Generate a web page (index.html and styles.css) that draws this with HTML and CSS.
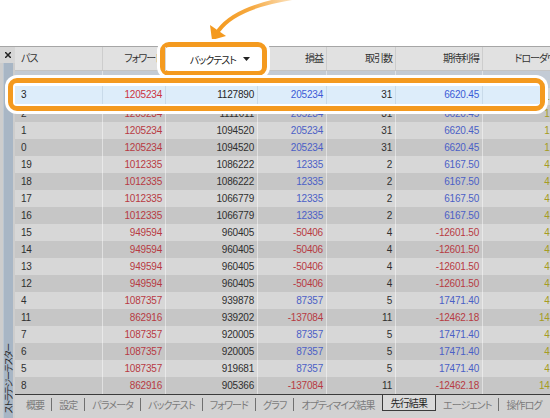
FILE: index.html
```html
<!DOCTYPE html>
<html lang="ja">
<head>
<meta charset="UTF-8">
<meta name="viewport" content="width=device-width, initial-scale=1.0">
<title>ストラテジーテスター</title>
<link rel="stylesheet" href="styles.css">
</head>
<body>
<div class="page">
  <div class="top">
    <svg class="arrow" width="550" height="46" viewBox="0 0 550 46">
      <defs>
        <linearGradient id="ag" x1="292" y1="0" x2="218" y2="31" gradientUnits="userSpaceOnUse">
          <stop offset="0" stop-color="#f49a1f" stop-opacity="0.3"/>
          <stop offset="0.5" stop-color="#f49a1f" stop-opacity="0.85"/>
          <stop offset="1" stop-color="#f49a1f"/>
        </linearGradient>
      </defs>
      <path d="M292 -2 Q236 7 219 30" fill="none" stroke="url(#ag)" stroke-width="4" stroke-linecap="round"/>
      <polygon points="212,40 226,36 210,25" fill="#f49a1f"/>
    </svg>
  </div>

  <div class="window">
    <div class="side">
      <div class="close">
        <svg width="6" height="6" viewBox="0 0 6 6"><path d="M0 0L6 6M6 0L0 6" stroke="#222" stroke-width="1.5"/></svg>
      </div>
      <div class="strip"><span class="strip-label">ストラテジーテスター</span></div>
    </div>

    <div class="main">
      <div class="grid">
        <div class="row head">
          <span>パス</span><span>フォワード</span><span>バックテスト</span><span>損益</span><span>取引数</span><span>期待利得</span><span>ドローダウン</span>
        </div>
        <div class="row sel"><span></span><span></span><span></span><span></span><span></span><span></span><span></span></div>
        <div class="row l"><span>3</span><span class="r">1205234</span><span>1127890</span><span class="b">205234</span><span>31</span><span class="b">6620.45</span><span class="y">1.76</span></div>
        <div class="row d"><span>2</span><span class="r">1205234</span><span>1111011</span><span class="b">205234</span><span>31</span><span class="b">6620.45</span><span class="y">1.76</span></div>
        <div class="row l"><span>1</span><span class="r">1205234</span><span>1094520</span><span class="b">205234</span><span>31</span><span class="b">6620.45</span><span class="y">1.76</span></div>
        <div class="row d"><span>0</span><span class="r">1205234</span><span>1094520</span><span class="b">205234</span><span>31</span><span class="b">6620.45</span><span class="y">1.76</span></div>
        <div class="row l"><span>19</span><span class="r">1012335</span><span>1086222</span><span class="b">12335</span><span>2</span><span class="b">6167.50</span><span class="y">4.21</span></div>
        <div class="row d"><span>18</span><span class="r">1012335</span><span>1086222</span><span class="b">12335</span><span>2</span><span class="b">6167.50</span><span class="y">4.21</span></div>
        <div class="row l"><span>17</span><span class="r">1012335</span><span>1066779</span><span class="b">12335</span><span>2</span><span class="b">6167.50</span><span class="y">4.21</span></div>
        <div class="row d"><span>16</span><span class="r">1012335</span><span>1066779</span><span class="b">12335</span><span>2</span><span class="b">6167.50</span><span class="y">4.21</span></div>
        <div class="row l"><span>15</span><span class="r">949594</span><span>960405</span><span class="r">-50406</span><span>4</span><span class="r">-12601.50</span><span class="y">4.93</span></div>
        <div class="row d"><span>14</span><span class="r">949594</span><span>960405</span><span class="r">-50406</span><span>4</span><span class="r">-12601.50</span><span class="y">4.93</span></div>
        <div class="row l"><span>13</span><span class="r">949594</span><span>960405</span><span class="r">-50406</span><span>4</span><span class="r">-12601.50</span><span class="y">4.93</span></div>
        <div class="row d"><span>12</span><span class="r">949594</span><span>960405</span><span class="r">-50406</span><span>4</span><span class="r">-12601.50</span><span class="y">4.93</span></div>
        <div class="row l"><span>4</span><span class="r">1087357</span><span>939878</span><span class="b">87357</span><span>5</span><span class="b">17471.40</span><span class="y">4.48</span></div>
        <div class="row d"><span>11</span><span class="r">862916</span><span>939202</span><span class="r">-137084</span><span>11</span><span class="r">-12462.18</span><span class="y">14.05</span></div>
        <div class="row l"><span>7</span><span class="r">1087357</span><span>920005</span><span class="b">87357</span><span>5</span><span class="b">17471.40</span><span class="y">4.48</span></div>
        <div class="row d"><span>6</span><span class="r">1087357</span><span>920005</span><span class="b">87357</span><span>5</span><span class="b">17471.40</span><span class="y">4.48</span></div>
        <div class="row l"><span>5</span><span class="r">1087357</span><span>919681</span><span class="b">87357</span><span>5</span><span class="b">17471.40</span><span class="y">4.48</span></div>
        <div class="row d"><span>8</span><span class="r">862916</span><span>905366</span><span class="r">-137084</span><span>11</span><span class="r">-12462.18</span><span class="y">14.05</span></div>
      </div>

      <div class="tabs">
        <span class="tab">概要</span>
        <span class="tab">設定</span>
        <span class="tab">パラメータ</span>
        <span class="tab">バックテスト</span>
        <span class="tab">フォワード</span>
        <span class="tab">グラフ</span>
        <span class="tab">オプティマイズ結果</span>
        <span class="tab on">先行結果</span>
        <span class="tab">エージェント</span>
        <span class="tab">操作ログ</span>
      </div>
    </div>
  </div>

  <!-- 強調枠 -->
  <div class="callout callout-head">
    <div class="head-cell">
      <span>バックテスト</span>
      <svg class="sort" width="7" height="4" viewBox="0 0 7 4"><polygon points="0,0 7,0 3.5,4" fill="#222"/></svg>
    </div>
  </div>
  <div class="callout callout-row">
    <div class="row hl"><span>3</span><span class="r">1205234</span><span>1127890</span><span class="b">205234</span><span>31</span><span class="b">6620.45</span><span></span></div>
  </div>
</div>
</body>
</html>
```

FILE: styles.css
```css
* {
    margin: 0;
    padding: 0;
    box-sizing: border-box;
}

body {
    width: 550px;
    height: 418px;
    overflow: hidden;
    background: #fff;
    font-family: "Liberation Sans", "Noto Sans CJK JP", sans-serif;
    font-size: 10px;
    color: #2f2f2f;
    font-feature-settings: "palt";
}

.page {
    position: relative;
    width: 550px;
    height: 418px;
    overflow: hidden;
}

.top {
    height: 46px;
}

.arrow {
    display: block;
}

.window {
    display: flex;
    height: 372px;
    border-top: 1px solid #a6a6a6;
    background: #cdcdcd;
}

.side {
    width: 15px;
    flex: none;
    display: flex;
    flex-direction: column;
}

.close {
    height: 16px;
    display: flex;
    align-items: center;
    justify-content: center;
    background: #d6d6d6;
}

.strip {
    flex: 1;
    margin: 0 2px 0 3px;
    background: #a8b6c5;
    border-left: 1px solid #bcc7d2;
    display: flex;
    flex-direction: column;
    justify-content: flex-end;
    align-items: center;
    padding-bottom: 4px;
}

.strip-label {
    writing-mode: vertical-rl;
    text-orientation: sideways;
    transform: rotate(180deg);
    font-family: "Noto Sans CJK JP", sans-serif;
    font-size: 9px;
    letter-spacing: -1.2px;
    line-height: 9px;
    color: #2b2b2b;
}

.main {
    flex: 1;
    min-width: 0;
    overflow: hidden;
    display: flex;
    flex-direction: column;
}

.grid {
    width: 552px;
    flex: none;
}

.row {
    display: grid;
    grid-template-columns: 88px 63px 92px 69px 69px 87px 84px;
    height: 17px;
    line-height: 17px;
    letter-spacing: -0.2px;
}

.row span {
    padding: 0 3px;
    text-align: right;
    white-space: nowrap;
    overflow: hidden;
    border-right: 1px solid rgba(255, 255, 255, 0.45);
}

.row span:first-child {
    text-align: left;
    padding-left: 6px;
}

.head {
    height: 24px;
    line-height: 23px;
    background: #e1e1e1;
    border-bottom: 1px solid #c4c4c4;
    letter-spacing: -1px;
}

.head span {
    color: #333;
    border-right-color: #cdcdcd;
}

.sel {
    background: #c3cbd5;
}

.l {
    background: #d7d7d7;
}

.d {
    background: #c6c6c6;
}

.r {
    color: #b73a43;
}

.b {
    color: #4b5fc6;
}

.y {
    color: #a59c22;
}

.tabs {
    height: 24px;
    border-top: 1px solid #3b3b3b;
    background: #d2d2d2;
    display: flex;
    align-items: flex-start;
    padding-left: 4px;
    white-space: nowrap;
    font-family: "Noto Sans CJK JP", sans-serif;
    letter-spacing: -0.9px;
}

.tab {
    margin-top: 3px;
    height: 13px;
    line-height: 13px;
    padding: 0 7px;
    color: #7b7b7b;
}

.tab + .tab {
    border-left: 1px solid #707070;
}

.tab.on {
    margin-top: 0;
    height: 16px;
    line-height: 15px;
    padding: 0 8px;
    border: 1px solid #3b3b3b;
    border-top: 0;
    background: #dadada;
    color: #1f1f1f;
}

.tab.on + .tab {
    border-left: 0;
}

/* 強調枠 */
.callout {
    position: absolute;
    border: 5px solid #f49a1f;
    border-radius: 9px;
    background: #fff;
    box-shadow: 0 0 0 3px #fff;
}

.callout-head {
    left: 160px;
    top: 42px;
    width: 107px;
    height: 34px;
}

.head-cell {
    height: 100%;
    border-left: 1px solid #d8d8d8;
    display: flex;
    align-items: center;
    justify-content: flex-end;
    padding-right: 12px;
    font-family: "Noto Sans CJK JP", sans-serif;
    letter-spacing: -1px;
    color: #222;
}

.sort {
    margin-left: 7px;
}

.callout-row {
    left: 8px;
    top: 78px;
    width: 537px;
    height: 33px;
    padding: 3px 0 0 2px;
    overflow: hidden;
}

.hl {
    height: 18px;
    line-height: 18px;
    background: #ddedfa;
    color: #262626;
}

.hl span {
    border-right-color: #c9dbea;
}

.hl .r {
    color: #cc3340;
}

.hl .b {
    color: #3b5bd6;
}
```
